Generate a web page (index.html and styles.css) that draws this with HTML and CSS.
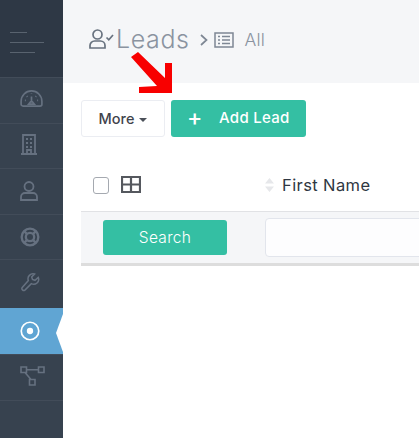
FILE: index.html
```html
<!DOCTYPE html>
<html lang="en">
<head>
<meta charset="utf-8">
<title>Leads</title>
<link rel="stylesheet" href="styles.css">
</head>
<body>
<div class="app">
  <nav class="sidebar">
    <div class="brand">
      <span class="bar bar-s"></span><span class="bar bar-l"></span><span class="bar bar-m"></span>
    </div>
    <a class="nav-item"><svg class="nav-icon gauge" viewBox="0 0 24 18"><path d="M3 17a2 2 0 0 1-2-2v-3a11 11 0 0 1 22 0v3a2 2 0 0 1-2 2z"/><path d="M9 15h6l-2-2.500h-2zM12 12V7M5 11h1M18 11h1M7 6.500l.7.7M17 6.500l-.7.7M12 3.500v.5"/></svg></a>
    <a class="nav-item"><svg class="nav-icon building" viewBox="0 0 18 21"><path d="M3 20V1h12v19M1 20h16M7 20v-4h4v4M6 5h2M10 5h2M6 9h2M10 9h2M6 13h2M10 13h2"/></svg></a>
    <a class="nav-item"><svg class="nav-icon person" viewBox="0 0 18 20"><circle cx="9" cy="5.500" r="4.500"/><path d="M1 19v-3a4 4 0 0 1 4-4h8a4 4 0 0 1 4 4v3z"/></svg></a>
    <a class="nav-item"><svg class="nav-icon thick" viewBox="0 0 24 24"><circle cx="12" cy="12" r="10"/><circle cx="12" cy="12" r="5"/><path d="M5 5l3.500 3.500M19 5l-3.500 3.500M5 19l3.500-3.500M19 19l-3.500-3.500"/></svg></a>
    <a class="nav-item tall"><svg class="nav-icon" viewBox="0 0 24 24"><path d="M22 6.500l-4 3.500-3-1-1-3 3.500-3.500a6 6 0 0 0-7.500 7.800L2.700 18.500a2.300 2.300 0 0 0 3.200 3.200l7.700-7.700a6 6 0 0 0 8.400-7.500z"/></svg></a>
    <a class="nav-item active"><svg class="nav-icon" viewBox="0 0 24 24"><circle cx="12" cy="12" r="10.500"/><circle class="dot" cx="12" cy="12" r="3.800"/></svg></a>
    <a class="nav-item last"><svg class="nav-icon wide" viewBox="0 0 25 20"><path d="M1 1h5.500v5.500H1zM18.500 1H24v5.500h-5.500zM9.500 13.500H15V19H9.500zM6.500 3.700h12M5 6.500l6 7"/></svg></a>
  </nav>
  <main class="content">
    <header class="page-header">
      <svg class="user-check" viewBox="0 0 25 20"><circle cx="8.500" cy="5.500" r="4.500"/><path d="M1 19v-2.500a4.500 4.500 0 0 1 4.500-4.500h6a4.500 4.500 0 0 1 4.500 4.500V19z"/><path d="M17.500 8.500l2.300 2.300 4.200-4.800"/></svg>
      <h1 class="title">Leads</h1>
      <svg class="chevron" viewBox="0 0 8 12"><path d="M1 1l5.500 5L1 11"/></svg>
      <svg class="list-icon" viewBox="0 0 20 16"><path d="M1 1h18v14H1zM4 4.500h2M4 8h2M4 11.500h2M8 4.500h8M8 8h8M8 11.500h8"/></svg>
      <span class="crumb">All</span>
    </header>
    <div class="toolbar">
      <button class="btn btn-more">More<span class="caret"></span></button>
      <button class="btn btn-add"><span class="plus">+</span><span>Add Lead</span></button>
    </div>
    <div class="table">
      <div class="head-row">
        <span class="checkbox"></span>
        <svg class="grid-icon" viewBox="0 0 20 17"><path d="M1 1h18v15H1zM10 1v15M1 8.500h18"/></svg>
        <svg class="sort-icon" viewBox="0 0 11 16"><path d="M5.500 1l4.500 5.500H1zM1 9.500h9L5.500 15z"/></svg>
        <span class="col-name">First Name</span>
      </div>
      <div class="filter-row">
        <button class="btn btn-search">Search</button>
        <input class="filter-input" type="text" aria-label="First Name">
      </div>
    </div>
  </main>
  <svg class="arrow" viewBox="0 0 44 44"><path d="M1 6l7-5 27 26V12h7v30H9v-6l18-1z"/></svg>
</div>
</body>
</html>
```
FILE: styles.css
```css
* { box-sizing: border-box; }
html, body { margin: 0; height: 100%; overflow: hidden; }
body { font-family: "Inter", "Liberation Sans", sans-serif; background: #fff; }
.app { position: relative; display: flex; width: 419px; height: 438px; overflow: hidden; }

.sidebar { flex: 0 0 63px; background: #37424f; display: flex; flex-direction: column; }
.brand { height: 77px; background: #2e3845; padding: 32px 0 0 10px; display: flex; flex-direction: column; gap: 9px; }
.bar { display: block; height: 1px; background: #59636f; }
.bar-s { width: 17px; }
.bar-l { width: 34px; }
.bar-m { width: 25px; }
.nav-item { position: relative; flex: none; height: 45.500px; display: flex; align-items: center; padding-left: 20px; border-top: 1px solid #424c59; }
.nav-item.tall { height: 49px; padding-bottom: 4px; }
.nav-item.last { height: 47.500px; border-bottom: 1px solid #424c59; padding-bottom: 3px; }
.nav-item.active { background: #60a5d3; border-top-color: #60a5d3; }
.nav-item.active::after { content: ""; position: absolute; right: 0; top: 5px; width: 7px; height: 38px; background: #fff; clip-path: polygon(100% 0, 0 50%, 100% 100%); }
.nav-icon { width: 20px; height: 20px; fill: none; stroke: #667180; stroke-width: 1.800; }
.nav-icon.gauge { width: 23px; height: 17px; margin-bottom: 4px; }
.nav-icon.building { width: 18px; height: 21px; margin-bottom: 2px; }
.nav-icon.person { width: 18px; height: 20px; }
.nav-icon.thick { stroke-width: 2.800; }
.nav-icon.wide { width: 25px; height: 20px; stroke-width: 1.600; }
.active .nav-icon { stroke: #fff; stroke-width: 2; }
.active .dot { fill: #fff; stroke: none; }

.content { flex: 1; min-width: 0; }
.page-header { height: 83px; background: #f5f6f8; display: flex; align-items: flex-start; padding: 29px 0 0 26px; color: #8a93a0; }
.user-check { flex: none; width: 25px; height: 20px; fill: none; stroke: #68727f; stroke-width: 1.700; }
.title { margin: -5px 0 0 2px; font-size: 25px; line-height: 30px; font-weight: 300; color: #8a93a0; letter-spacing: .6px; }
.chevron { flex: none; width: 8px; height: 12px; margin: 5px 0 0 10px; fill: none; stroke: #7e8794; stroke-width: 1.700; }
.list-icon { flex: none; width: 20px; height: 16px; margin: 3px 0 0 6px; fill: none; stroke: #7e8794; stroke-width: 1.500; }
.crumb { margin: -1px 0 0 11px; font-size: 17.500px; line-height: 24px; font-weight: 300; color: #8a93a0; letter-spacing: .2px; }

.toolbar { display: flex; gap: 6px; padding: 17px 0 0 18px; }
.btn { font: inherit; border-radius: 3px; cursor: pointer; flex: none; }
.btn-more { width: 84px; height: 37px; background: #fff; border: 1px solid #ebedf2; color: #3f444c; font-size: 14.500px; font-weight: 500; padding: 0; display: flex; align-items: center; justify-content: center; }
.caret { margin: 2px 0 0 5px; border: 4.500px solid transparent; border-top-color: #4b5059; border-bottom: 0; }
.btn-add { width: 135px; height: 37px; background: #34bfa3; border: 0; color: #fff; font-size: 15px; font-weight: 500; letter-spacing: .3px; padding: 0 0 2px 16px; display: flex; align-items: center; }
.plus { width: 32px; font-size: 23px; line-height: 20px; font-weight: 500; text-align: left; letter-spacing: 0; }

.table { margin: 21px 0 0 18px; }
.head-row { position: relative; height: 53px; display: flex; align-items: center; padding-left: 12px; }
.checkbox { flex: none; width: 16px; height: 17px; margin-top: 2px; border: 1px solid #a5a9b0; border-radius: 3px; background: #fff; }
.grid-icon { flex: none; width: 20px; height: 17px; margin-left: 12px; fill: none; stroke: #55585e; stroke-width: 2.200; }
.sort-icon { flex: none; width: 11px; height: 16px; margin-left: 123px; fill: #e6e7ea; }
.col-name { margin-left: 7px; font-size: 16.500px; letter-spacing: .4px; color: #2f3742; white-space: nowrap; }
.filter-row { height: 55px; background: #f5f6f8; border-top: 1px solid #e1e2e5; border-bottom: 3px solid #dddddd; display: flex; align-items: flex-start; padding: 8px 0 0 22px; }
.btn-search { width: 124px; height: 35px; background: #34bfa3; border: 0; color: #fff; font-size: 15.500px; font-weight: 300; letter-spacing: .3px; padding: 0; }
.filter-input { flex: 0 0 220px; height: 39px; margin: -2px 0 0 38px; background: #fdfdfe; border: 1px solid #e2e5ec; border-radius: 4px; }

.arrow { position: absolute; left: 130px; top: 51px; width: 44px; height: 44px; fill: #f80000; }
```
